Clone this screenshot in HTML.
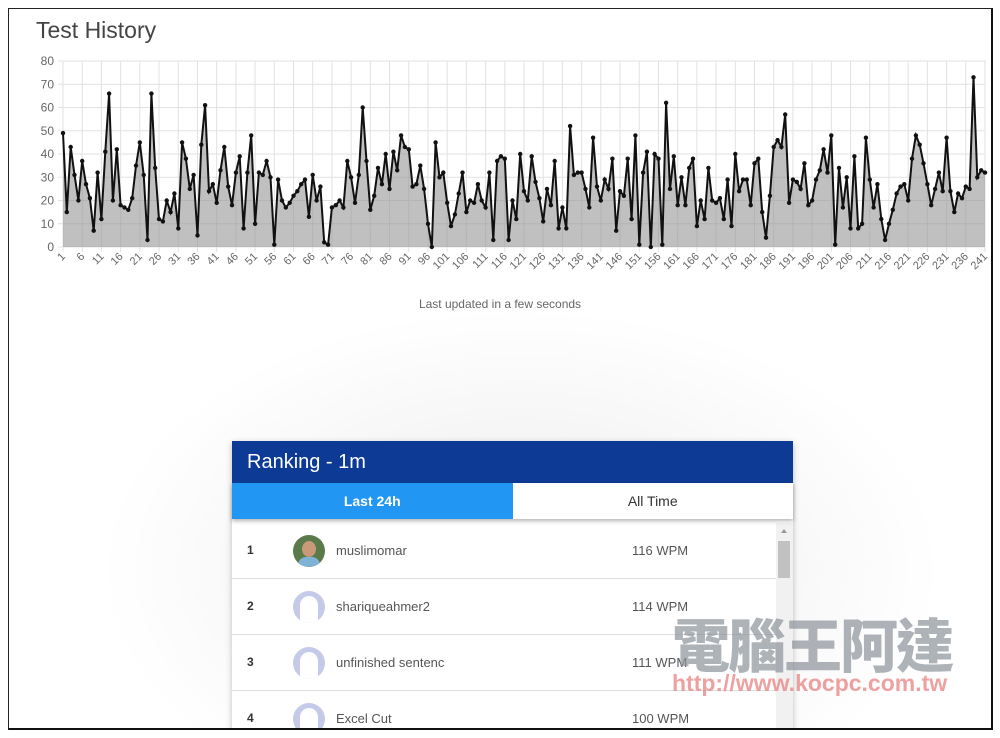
<!DOCTYPE html>
<html><head><meta charset="utf-8">
<style>
*{margin:0;padding:0;box-sizing:border-box}
body{width:1000px;height:738px;background:#fff;font-family:"Liberation Sans",Arial,sans-serif;position:relative;overflow:hidden}
.frame{position:absolute;left:8px;top:8px;width:985px;height:722px;border:1px solid #222;border-bottom:2px solid #111;border-right:2px solid #111;background:radial-gradient(ellipse 420px 260px at 512px 560px,#ececec 0%,#f7f7f7 60%,#fff 100%)}
.title{position:absolute;left:36px;top:17px;font-size:23px;color:#444}
.upd{position:absolute;left:0;width:1000px;top:297px;text-align:center;font-size:12px;color:#666}
.clip{position:absolute;left:0;top:0;width:1000px;height:728px;overflow:hidden}
.panel{position:absolute;left:232px;top:441px;width:561px;height:300px;background:#fff;box-shadow:0 2px 6px rgba(0,0,0,.25)}
.hd{height:42px;background:#0d3a94;color:#fff;font-size:20px;padding:10px 0 0 15px}
.tabs{height:36px;display:flex;box-shadow:0 2px 4px rgba(0,0,0,.3);position:relative;z-index:2}
.tabs div{flex:1;text-align:center;font-size:14px;line-height:36px}
.t1{background:#2196f3;color:#fff;font-weight:bold}
.t2{color:#333}
.row{position:absolute;left:0;width:544px;height:56px;border-bottom:1px solid #ddd;font-size:13px;color:#555}
.row .n{position:absolute;left:15px;top:20px;color:#333;font-weight:bold;font-size:12px}
.row .av{position:absolute;left:61px;top:12px;width:32px;height:32px;border-radius:50%;background:#c5cae9;overflow:hidden}
.row .nm{position:absolute;left:104px;top:20px}
.row .w{position:absolute;left:400px;top:20px}
.sb{position:absolute;left:544px;top:82px;width:17px;height:220px;background:#f1f1f1}
.th{position:absolute;left:2px;top:18px;width:12px;height:37px;background:#c1c1c1}
.wm{position:absolute;left:672px;top:600px;font-family:"Noto Sans CJK TC",sans-serif;font-weight:900;font-size:58px;color:#8d939b;opacity:.7;letter-spacing:-2px}
.url{position:absolute;left:672px;top:670px;font-weight:bold;font-size:23px;color:#e87a7a;opacity:.7}
</style></head><body>
<div class="frame"></div>
<div class="title">Test History</div>
<svg id="ch" style="position:absolute;left:0;top:0" width="1000" height="300"></svg>
<div class="upd">Last updated in a few seconds</div>
<div class="clip">
<div class="panel">
<div class="hd">Ranking - 1m</div>
<div class="tabs"><div class="t1">Last 24h</div><div class="t2">All Time</div></div>
<div class="row" style="top:82px"><span class="n">1</span><div class="av" style="background:#5b7a4a"><div style="position:absolute;left:9px;top:6px;width:14px;height:16px;border-radius:50%;background:#c89a7a"></div><div style="position:absolute;left:5px;top:22px;width:22px;height:12px;border-radius:8px 8px 0 0;background:#7fb3d5"></div></div><span class="nm">muslimomar</span><span class="w">116 WPM</span></div>
<div class="row" style="top:138px"><span class="n">2</span><div class="av"><div style="position:absolute;left:7px;top:5px;width:18px;height:27px;border-radius:9px 9px 0 0;background:#fff"></div></div><span class="nm">shariqueahmer2</span><span class="w">114 WPM</span></div>
<div class="row" style="top:194px"><span class="n">3</span><div class="av"><div style="position:absolute;left:7px;top:5px;width:18px;height:27px;border-radius:9px 9px 0 0;background:#fff"></div></div><span class="nm">unfinished sentenc</span><span class="w">111 WPM</span></div>
<div class="row" style="top:250px"><span class="n">4</span><div class="av"><div style="position:absolute;left:7px;top:5px;width:18px;height:27px;border-radius:9px 9px 0 0;background:#fff"></div></div><span class="nm">Excel Cut</span><span class="w">100 WPM</span></div>
<div class="sb"><div style="position:absolute;left:5px;top:6px;border:3px solid transparent;border-bottom:4px solid #999;border-top:0"></div><div class="th"></div></div>
</div>
<div class="wm">電腦王阿達</div>
<div class="url">http://www.kocpc.com.tw</div>
</div>
<script>
var d=[49,15,43,31,20,37,27,21,7,32,12,41,66,20,42,18,17,16,21,35,45,31,3,66,34,12,11,20,15,23,8,45,38,25,31,5,44,61,24,27,19,33,43,26,18,32,39,8,32,48,10,32,31,37,30,1,29,20,17,19,22,24,27,29,13,31,20,26,2,1,17,18,20,17,37,30,19,31,60,37,16,22,34,27,40,25,41,33,48,43,42,26,27,35,25,10,0,45,30,32,19,9,14,23,32,15,20,19,27,20,17,32,3,37,39,38,3,20,12,40,24,20,39,28,21,11,25,18,37,8,17,8,52,31,32,32,25,17,47,26,20,29,25,38,7,24,22,38,12,48,1,32,41,0,40,38,1,62,25,39,18,30,18,34,38,9,20,12,34,20,19,21,12,29,9,40,24,29,29,18,36,38,15,4,22,43,46,43,57,19,29,28,25,36,18,20,29,33,42,32,48,1,34,17,30,8,39,8,10,47,29,17,27,12,3,10,16,23,26,27,20,38,48,44,36,27,18,25,32,24,47,24,15,23,21,26,25,73,30,33,32];
var L=63,R=985,T=61,B=247,n=d.length,s='';
for(var i=0;i<=8;i++){var y=B-(B-T)*i/8;s+='<line x1="'+(L-5)+'" x2="'+R+'" y1="'+y+'" y2="'+y+'" stroke="#e2e2e2"/>';s+='<text x="54" y="'+(y+4)+'" text-anchor="end" font-size="12" fill="#666" font-family="Liberation Sans">'+(i*10)+'</text>';}
var st=(R-L)/(n-1),pts=[];
for(var i=0;i<n;i++){var x=L+i*st;if(i%5==0){s+='<line x1="'+x+'" x2="'+x+'" y1="'+T+'" y2="'+(B+5)+'" stroke="#e2e2e2"/>';s+='<text transform="translate('+(x+3)+','+(B+10)+') rotate(-45)" text-anchor="end" font-size="11" fill="#666" font-family="Liberation Sans">'+(i+1)+'</text>';}pts.push(x.toFixed(1)+','+(B-d[i]*(B-T)/80).toFixed(1));}
s+='<polygon points="'+L+','+B+' '+pts.join(' ')+' '+R+','+B+'" fill="rgba(150,150,150,0.6)"/>';
s+='<polyline points="'+pts.join(' ')+'" fill="none" stroke="#111" stroke-width="2"/>';
for(var i=0;i<n;i++){var p=pts[i].split(',');s+='<circle cx="'+p[0]+'" cy="'+p[1]+'" r="2.2" fill="#111"/>';}
document.getElementById('ch').innerHTML=s;
</script>
</body></html>
